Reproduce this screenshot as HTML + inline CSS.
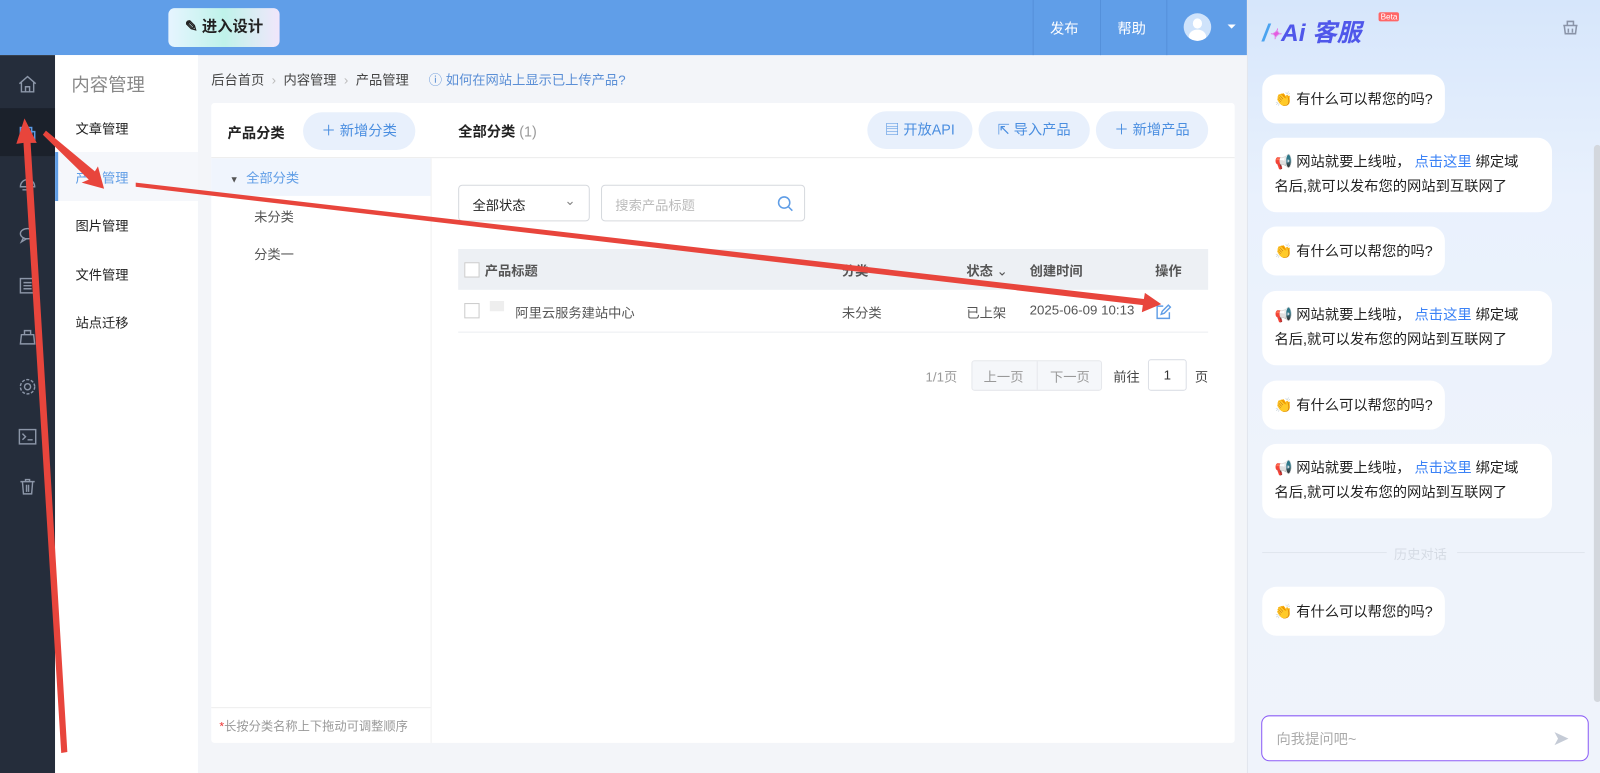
<!DOCTYPE html>
<html><head><meta charset="utf-8"><style>
*{box-sizing:border-box;margin:0;padding:0}
html,body{width:1600px;height:773px;overflow:hidden}
body{font-family:"Liberation Sans","Noto Sans CJK SC",sans-serif;font-size:13px;color:#333;background:#f3f5f9;position:relative}
#w{position:absolute;left:0;top:0;width:1568px;height:758px;transform:scale(1.0204);transform-origin:0 0}
.abs{position:absolute}
.top{left:0;top:0;width:1222px;height:54px;background:#609ee8}
.vd{position:absolute;top:0;width:1px;height:54px;background:#5490da}
.dark{left:0;top:54px;width:54px;height:719px;background:#252d3b}
.ico{position:absolute;left:17px;width:20px;height:20px}
.side2{left:54px;top:54px;width:140px;height:719px;background:#fff}
.side2 .it{position:absolute;left:20px;font-size:13px;color:#222}
.card{left:207px;top:101px;width:1003px;height:627px;background:#fff;border-radius:3px}
.pill{position:absolute;top:109px;height:37px;border-radius:19px;background:#e8f0fc;color:#4a8ee0;font-size:14px;line-height:37px;text-align:center}
.chat{left:1222px;top:0;width:380px;height:773px;background:linear-gradient(180deg,#d6e6fb 0%,#e9f1fd 25%,#eef3fb 60%,#eff3fb 100%);border-left:1px solid #e2e6ee}
.bub{position:absolute;left:1237px;background:#fff;border-radius:14px;font-size:14px;color:#222;padding:0 12px;line-height:24px}
.lnk{color:#3b82f6}
</style></head><body><div id="w">
<div class="abs top">
 <div class="vd" style="left:1012px"></div>
 <div class="vd" style="left:1078px"></div>
 <div class="vd" style="left:1143px"></div>
 <div class="abs" style="left:165px;top:8px;width:109px;height:38px;border-radius:6px;background:linear-gradient(90deg,#e6f4ff,#bff3ea 50%,#f1e6fb);font-size:15px;font-weight:bold;color:#222;line-height:38px;text-align:center">✎ 进入设计</div>
 <div class="abs" style="left:1029px;top:18px;color:#fff;font-size:14px">发布</div>
 <div class="abs" style="left:1095px;top:18px;color:#fff;font-size:14px">帮助</div>
 <div class="abs" style="left:1160px;top:13px;width:27px;height:27px;border-radius:50%;background:#cfe3fb;overflow:hidden"><div class="abs" style="left:9px;top:5px;width:9px;height:10px;border-radius:50%;background:#fff"></div><div class="abs" style="left:5px;top:16px;width:17px;height:14px;border-radius:50% 50% 0 0;background:#fff"></div></div>
 <div class="abs" style="left:1203px;top:24px;border:4px solid transparent;border-top:4px solid #fff"></div>
</div>
<div class="abs dark">
 <div class="abs" style="left:0;top:52px;width:54px;height:47px;background:#1b212b"></div>
 <svg class="ico" style="top:18px" viewBox="0 0 20 20" fill="none" stroke="#8c96a8" stroke-width="1.4"><path d="M2 10L10 3l8 7M4 8.5V18h12V8.5M8 18v-5h4v5"/></svg>
 <svg class="ico" style="top:68px" viewBox="0 0 20 20" fill="none" stroke="#5b9be6" stroke-width="1.5"><rect x="3" y="3" width="11" height="11"/><rect x="7" y="7" width="10" height="10"/></svg>
 <svg class="ico" style="top:117px" viewBox="0 0 20 20" fill="none" stroke="#8c96a8" stroke-width="1.4"><path d="M3 12c0-4 3-7 7-7s7 3 7 7H3zM5 15h10"/></svg>
 <svg class="ico" style="top:166px" viewBox="0 0 20 20" fill="none" stroke="#8c96a8" stroke-width="1.4"><ellipse cx="10" cy="9" rx="7" ry="5"/><path d="M6 13l-2 4 5-3"/></svg>
 <svg class="ico" style="top:216px" viewBox="0 0 20 20" fill="none" stroke="#8c96a8" stroke-width="1.4"><rect x="3" y="3" width="14" height="14"/><path d="M6 7h8M6 10h8M6 13h8"/></svg>
 <svg class="ico" style="top:266px" viewBox="0 0 20 20" fill="none" stroke="#8c96a8" stroke-width="1.4"><path d="M3 17h14l-1-9H4zM7 8V4h6v4"/></svg>
 <svg class="ico" style="top:315px" viewBox="0 0 20 20" fill="none" stroke="#8c96a8" stroke-width="1.4"><circle cx="10" cy="10" r="3"/><circle cx="10" cy="10" r="7" stroke-dasharray="3 1.5"/></svg>
 <svg class="ico" style="top:364px" viewBox="0 0 20 20" fill="none" stroke="#8c96a8" stroke-width="1.4"><rect x="2" y="3" width="16" height="14"/><path d="M5 7l3 3-3 3M10 13h5"/></svg>
 <svg class="ico" style="top:413px" viewBox="0 0 20 20" fill="none" stroke="#8c96a8" stroke-width="1.4"><path d="M3 5h14M8 5V3h4v2M5 5l1 12h8l1-12M9 8v7M11 8v7"/></svg>
</div>
<div class="abs side2">
 <div class="abs" style="left:16px;top:15px;font-size:18px;color:#888">内容管理</div>
 <div class="abs" style="left:0;top:95px;width:140px;height:48px;background:#f5f7fb;border-left:3px solid #5f9de6"></div>
 <div class="it" style="top:62px">文章管理</div>
 <div class="it" style="top:110px;color:#5f9de6">产品管理</div>
 <div class="it" style="top:157px">图片管理</div>
 <div class="it" style="top:205px">文件管理</div>
 <div class="it" style="top:252px">站点迁移</div>
</div>
<div class="abs" style="left:207px;top:68px;font-size:13px;color:#444">后台首页 <span style="color:#bbb">&nbsp;›&nbsp;</span> 内容管理 <span style="color:#bbb">&nbsp;›&nbsp;</span> 产品管理 <span style="color:#5b8fd6;margin-left:16px">ⓘ 如何在网站上显示已上传产品?</span></div>
<div class="abs card">
 <div class="abs" style="left:0;top:53px;width:1003px;height:1px;background:#ececec"></div>
 <div class="abs" style="left:215px;top:54px;width:1px;height:573px;background:#f0f0f0"></div>
 <div class="abs" style="left:16px;top:19px;font-size:14px;font-weight:bold;color:#222">产品分类</div>
 <div class="abs" style="left:90px;top:9px;width:110px;height:37px;border-radius:19px;background:#e8f0fc;color:#4a8ee0;font-size:14px;line-height:37px;text-align:center">＋ 新增分类</div>
 <div class="abs" style="left:0;top:54px;width:215px;height:37px;background:#f0f5fd"></div>
 <div class="abs" style="left:18px;top:63px;font-size:13px;color:#5f9de6"><span style="font-size:9px;color:#555">▼</span>&nbsp; 全部分类</div>
 <div class="abs" style="left:42px;top:101px;color:#555">未分类</div>
 <div class="abs" style="left:42px;top:138px;color:#555">分类一</div>
 <div class="abs" style="left:0;top:592px;width:215px;height:1px;background:#eee"></div>
 <div class="abs" style="left:8px;top:602px;font-size:12px;color:#999"><span style="color:#e33">*</span>长按分类名称上下拖动可调整顺序</div>
 <div class="abs" style="left:242px;top:18px;font-size:14px;font-weight:bold;color:#222">全部分类 <span style="font-weight:normal;color:#999">(1)</span></div>
</div>
<div class="pill" style="left:850px;width:103px">▤ 开放API</div>
<div class="pill" style="left:959px;width:109px">⇱ 导入产品</div>
<div class="pill" style="left:1074px;width:110px">＋ 新增产品</div>
<div class="abs" style="left:449px;top:181px;width:129px;height:36px;border:1px solid #d6d9de;border-radius:4px;background:#fff;padding:9px 13px;color:#222">全部状态<span style="position:absolute;right:13px;top:7px;color:#888">⌄</span></div>
<div class="abs" style="left:589px;top:181px;width:200px;height:36px;border:1px solid #d6d9de;border-radius:4px;background:#fff;padding:9px 13px;color:#bbb">搜索产品标题
 <svg class="abs" style="right:10px;top:9px" width="17" height="17" viewBox="0 0 17 17" fill="none" stroke="#5f9de6" stroke-width="1.5"><circle cx="7.5" cy="7.5" r="5.5"/><path d="M11.5 11.5l4 4"/></svg></div>
<div class="abs" style="left:449px;top:244px;width:735px;height:40px;background:#edf0f4;font-weight:bold;color:#555">
 <div class="abs" style="left:6px;top:13px;width:15px;height:15px;border:1px solid #ccc;background:#fff"></div>
 <div class="abs" style="left:26px;top:11px">产品标题</div>
 <div class="abs" style="left:376px;top:11px">分类</div>
 <div class="abs" style="left:498px;top:11px">状态 <span style="font-weight:normal">⌄</span></div>
 <div class="abs" style="left:560px;top:11px">创建时间</div>
 <div class="abs" style="left:683px;top:11px">操作</div>
</div>
<div class="abs" style="left:449px;top:284px;width:735px;height:42px;border-bottom:1px solid #ebeef2;color:#555">
 <div class="abs" style="left:6px;top:13px;width:15px;height:15px;border:1px solid #ccc;background:#fff"></div>
 <div class="abs" style="left:31px;top:11px;width:14px;height:10px;background:#eee"></div>
 <div class="abs" style="left:56px;top:12px">阿里云服务建站中心</div>
 <div class="abs" style="left:376px;top:12px">未分类</div>
 <div class="abs" style="left:498px;top:12px">已上架</div>
 <div class="abs" style="left:560px;top:12px">2025-06-09 10:13</div>
 <svg class="abs" style="left:683px;top:14px" width="16" height="16" viewBox="0 0 16 16" fill="none" stroke="#5f9de6" stroke-width="1.4"><path d="M8 2H2v12h12V8M6 10l1-3 6-6 2 2-6 6z"/></svg>
</div>
<div class="abs" style="left:907px;top:359px;color:#999">1/1页</div>
<div class="abs" style="left:952px;top:353px;width:128px;height:30px;border:1px solid #e6e8ec;border-radius:3px;background:#f5f7fa;color:#999"><span class="abs" style="left:11px;top:5px">上一页</span><div class="abs" style="left:63px;top:0;width:1px;height:28px;background:#e6e8ec"></div><span class="abs" style="left:76px;top:5px">下一页</span></div>
<div class="abs" style="left:1091px;top:359px;color:#444">前往</div>
<div class="abs" style="left:1125px;top:352px;width:38px;height:31px;border:1px solid #dcdfe6;border-radius:3px;background:#fff;text-align:center;line-height:29px">1</div>
<div class="abs" style="left:1171px;top:359px;color:#444">页</div>

<div class="abs chat">
 <div class="abs" style="left:14px;top:12px;font-size:24px;font-weight:bold;font-style:italic;color:#4f57ea"><span style="color:#4aa3f0">/</span><span style="color:#e45be0;font-size:14px;vertical-align:middle">✦</span>Ai 客服</div>
 <div class="abs" style="left:128px;top:12px;background:#f66;color:#fff;font-size:8px;padding:0 2px;border-radius:2px">Beta</div>
 <svg class="abs" style="left:307px;top:18px" width="18" height="16" viewBox="0 0 18 16" fill="none" stroke="#8a94a8" stroke-width="1.5"><path d="M2 7h14M3 7l1 8h10l1-8M6 7V3h6v4M7 10v4M11 10v4"/></svg>
 <div class="abs" style="left:339px;top:142px;width:7px;height:546px;background:#d3d7dd;border-radius:4px"></div>
 <div class="abs" style="left:14px;top:541px;width:122px;height:1px;background:#dfe5ee"></div>
 <div class="abs" style="left:205px;top:541px;width:125px;height:1px;background:#dfe5ee"></div>
 <div class="abs" style="left:143px;top:533px;font-size:13px;color:#d5dbe4">历史对话</div>
 <div class="abs" style="left:13px;top:701px;width:321px;height:45px;border:1px solid #8b5cf6;border-radius:8px;background:#fff;color:#aaa;font-size:14px;padding:12px 14px">向我提问吧~<span class="abs" style="right:18px;top:9px;color:#c5cbd6;font-size:20px">➤</span></div>
</div>
<div class="bub" style="top:73px;height:48px;padding-top:12px">👏 有什么可以帮您的吗?</div>
<div class="bub" style="top:135px;width:284px;height:73px;padding-top:11px;padding-right:26px">📢 网站就要上线啦， <span class="lnk">点击这里</span> 绑定域名后,就可以发布您的网站到互联网了</div>
<div class="bub" style="top:222px;height:48px;padding-top:12px">👏 有什么可以帮您的吗?</div>
<div class="bub" style="top:285px;width:284px;height:73px;padding-top:11px;padding-right:26px">📢 网站就要上线啦， <span class="lnk">点击这里</span> 绑定域名后,就可以发布您的网站到互联网了</div>
<div class="bub" style="top:373px;height:48px;padding-top:12px">👏 有什么可以帮您的吗?</div>
<div class="bub" style="top:435px;width:284px;height:73px;padding-top:11px;padding-right:26px">📢 网站就要上线啦， <span class="lnk">点击这里</span> 绑定域名后,就可以发布您的网站到互联网了</div>
<div class="bub" style="top:575px;height:48px;padding-top:12px">👏 有什么可以帮您的吗?</div>

<svg class="abs" style="left:0;top:0" width="1600" height="773">
 <g fill="#e8453c">
  <polygon points="60,738 66,737 30,140 36,140 24,116 16,141 23,140"/>
  <polygon points="42,132 45,128 93,168 96,163 102,185 80,179 87,176"/>
  <polygon points="133,179 133,183 1120,299 1119,306 1138,298 1122,287 1121,293"/>
 </g>
</svg>
</div></body></html>
